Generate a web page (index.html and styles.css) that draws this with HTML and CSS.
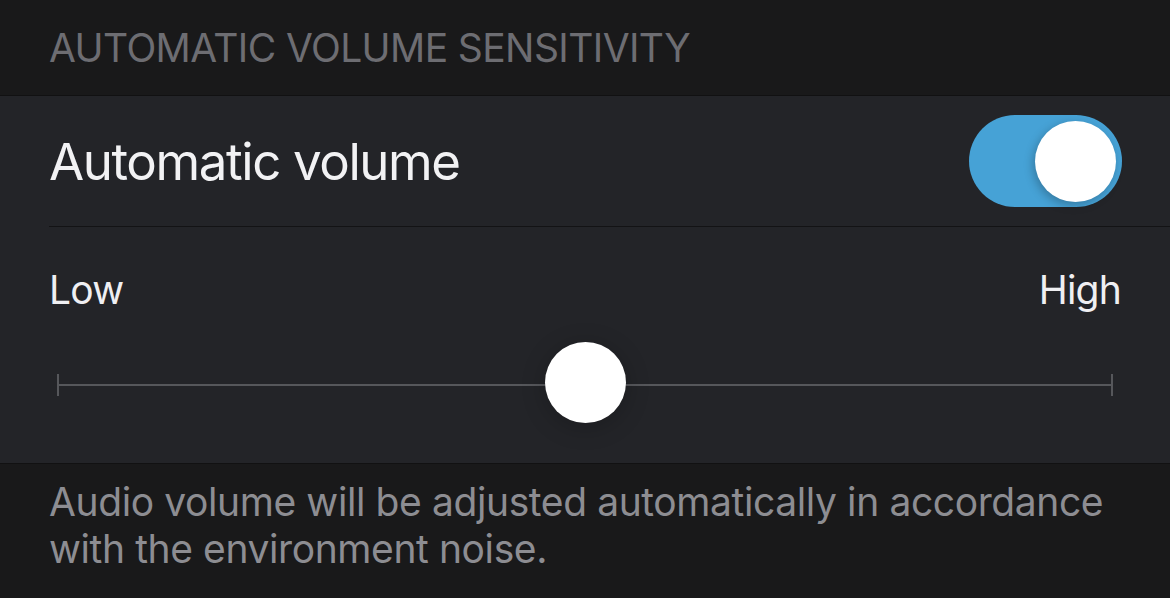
FILE: index.html
```html
<!DOCTYPE html>
<html lang="en">
<head>
  <meta charset="UTF-8" />
  <meta name="viewport" content="width=device-width, initial-scale=1.0"/>
  <title>Automatic Volume</title>
  <link rel="stylesheet" href="styles.css">
</head>
<body>
  <div class="section-header">AUTOMATIC VOLUME SENSITIVITY</div>

  <div class="group">
    <div class="row">
      <span class="row-title">Automatic volume</span>
      <div class="toggle on">
        <div class="knob"></div>
      </div>
    </div>

    <div class="slider-row">
      <div class="slider-labels">
        <span>Low</span>
        <span>High</span>
      </div>
      <div class="slider">
        <div class="track"></div>
        <div class="thumb" style="left: 50%"></div>
      </div>
    </div>
  </div>

  <p class="footer">Audio volume will be adjusted automatically in accordance with the environment noise.</p>
</body>
</html>
```

FILE: styles.css
```css
body {
  margin: 0;
  background-color: #19191a;
  font-family: 'Inter', 'Noto Sans', sans-serif;
  color: #f2f2f4;
}

.section-header {
  height: 96px;
  box-sizing: border-box;
  padding: 28px 49px 0;
  font-size: 39px;
  line-height: 1;
  letter-spacing: -0.6px;
  color: #6d6d72;
  border-bottom: 1px solid #111112;
}

.group {
  background-color: #232428;
  border-bottom: 1px solid #111112;
}

.row {
  height: 131px;
  box-sizing: border-box;
  margin-left: 49px;
  padding-right: 48px;
  display: flex;
  align-items: center;
  justify-content: space-between;
  border-bottom: 1px solid #131315;
}

.row-title {
  font-size: 51px;
  line-height: 1;
  letter-spacing: -1.4px;
}

.toggle {
  width: 153px;
  height: 92px;
  border-radius: 46px;
  background-color: #46a2d6;
  position: relative;
}

.toggle .knob {
  position: absolute;
  top: 6px;
  right: 6px;
  width: 81px;
  height: 81px;
  border-radius: 50%;
  background: #fff;
  box-shadow: -2px 3px 10px rgba(0, 0, 0, 0.25);
}

.slider-row {
  padding: 43px 49px 40px;
}

.slider-labels {
  display: flex;
  justify-content: space-between;
  font-size: 39px;
  line-height: 1;
  letter-spacing: -0.8px;
  color: #efeff2;
}

.slider {
  position: relative;
  height: 81px;
  margin: 33px 8px 0;
}

.track {
  position: absolute;
  left: 0;
  right: 0;
  top: 42px;
  height: 2px;
  background-color: #56575b;
}

.track::before,
.track::after {
  content: '';
  position: absolute;
  top: -10px;
  width: 2px;
  height: 22px;
  background-color: #56575b;
}

.track::before {
  left: 0;
}

.track::after {
  right: 0;
}

.thumb {
  position: absolute;
  top: 0;
  width: 81px;
  height: 81px;
  margin-left: -40px;
  border-radius: 50%;
  background: #fff;
  box-shadow: 0 4px 24px rgba(0, 0, 0, 0.22);
}

.footer {
  margin: 0;
  padding: 14px 40px 0 49px;
  font-size: 39px;
  line-height: 47px;
  letter-spacing: -0.4px;
  color: #8d8d92;
}
```
